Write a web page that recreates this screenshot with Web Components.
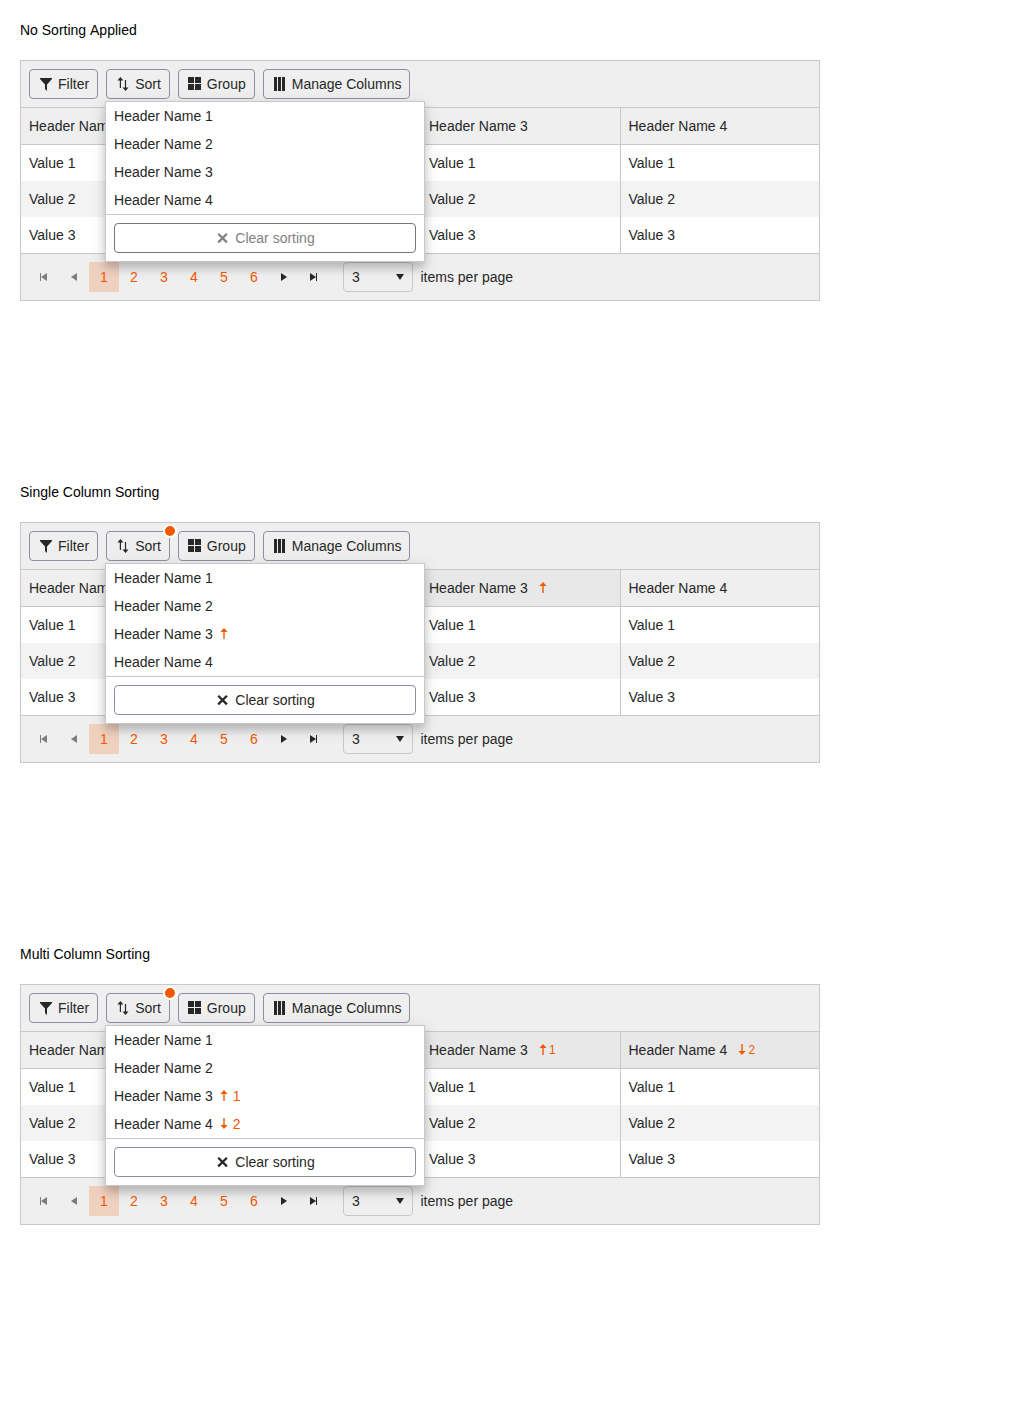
<!DOCTYPE html>
<html lang="en">
<head>
<meta charset="utf-8">
<title>Grid sorting</title>
<style>
html{background:#fff}
body{margin:0;padding:20px;display:flex;flex-direction:column;font:14px/20px "Liberation Sans",Arial,sans-serif;color:#000}
</style>
</head>
<body>
<sort-demo heading="No Sorting Applied" sort=""></sort-demo>
<sort-demo heading="Single Column Sorting" sort="3:asc"></sort-demo>
<sort-demo heading="Multi Column Sorting" sort="3:asc,4:desc"></sort-demo>
<script>
const ICONS = {
  filter: '<path d="M2 2h12v1L9 8.500V15l-2-2V8.500L2 3z"/>',
  sort: '<path d="M5.400 1L8.400 4.500H6V12H4.800V4.500H2.400zM9.900 4h1.200v7.500h2.400L10.500 15l-3-3.500h2.400z"/>',
  group: '<path d="M1 1h6v6H1zM8 1h6v6H8zM1 8h6v6H1zM8 8h6v6H8z"/>',
  columns: '<path d="M2 1h3v14H2zM6 1h3v14H6zM10 1h3v14h-3z"/>',
  close: '<path d="M3.200 3.700l8.700 8.700M11.900 3.700l-8.700 8.700" fill="none" stroke="currentColor" stroke-width="2.300"/>',
  asc: '<path d="M8 2l3.600 4H8.700v7H7.300V6H4.400z"/>',
  desc: '<path d="M7.300 2h1.400v7h2.900L8 13 4.400 9h2.900z"/>',
  first: '<path d="M4 4h1v8H4zM11 4v8L5 8z"/>',
  prev: '<path d="M11 4v8L5 8z"/>',
  next: '<path d="M5 4v8l6-4z"/>',
  last: '<path d="M4 4v8l6-4zM10 4h1v8h-1z"/>',
  caret: '<path d="M4 5h8l-4 6z"/>'
};
const parseSort = s => (s || '').split(',').filter(Boolean).map(p => p.split(':'));

class UiIcon extends HTMLElement {
  connectedCallback() {
    this.attachShadow({mode: 'open'}).innerHTML = `<style>
      :host{display:inline-block;flex:none;width:16px;height:16px}
      svg{display:block;width:16px;height:16px;fill:currentColor}
    </style><svg viewBox="0 0 16 16">${ICONS[this.getAttribute('name')]}</svg>`;
  }
}

class UiButton extends HTMLElement {
  connectedCallback() {
    const icon = this.getAttribute('icon');
    this.attachShadow({mode: 'open'}).innerHTML = `<style>
      :host{display:flex;position:relative}
      button{display:flex;flex:1;align-items:center;justify-content:center;gap:4px;box-sizing:border-box;height:30px;margin:0;padding:0 8px;
        border:1px solid #8f8f9d;border-radius:4px;background:none;color:#272727;font:inherit;white-space:nowrap}
      :host([disabled]) button{border-color:#777;color:#818181}
      i{position:absolute;top:-7px;right:-7px;width:10px;height:10px;border:2px solid #fff;border-radius:50%;background:#f35800}
    </style><button><ui-icon name="${icon}"></ui-icon><slot></slot></button>${this.hasAttribute('badge') ? '<i></i>' : ''}<slot name="popup"></slot>`;
  }
}

class SortMenu extends HTMLElement {
  connectedCallback() {
    const sort = parseSort(this.getAttribute('sort'));
    const items = [1, 2, 3, 4].map(n => {
      const i = sort.findIndex(s => +s[0] === n);
      const mark = i < 0 ? '' : `<ui-icon name="${sort[i][1]}"></ui-icon>${sort.length > 1 ? `<b>${i + 1}</b>` : ''}`;
      return `<div class="item"><span>Header Name ${n}</span>${mark}</div>`;
    }).join('');
    this.attachShadow({mode: 'open'}).innerHTML = `<style>
      :host{display:block;position:absolute;z-index:2;top:32px;left:-1.120px;box-sizing:border-box;width:320px;border:1px solid #c8c8c8;background:#fff;color:#272727;
        box-shadow:0 6px 8px rgba(0,0,0,.16),0 4px 16px rgba(0,0,0,.12)}
      .item{display:flex;align-items:center;height:28px;padding:0 8px}
      ui-icon,b{color:#f35800;font-weight:normal}
      ui-icon{margin-left:3.600px}
      b{margin-left:.3px}
      .foot{border-top:1px solid #c8c8c8;padding:8px}
    </style>${items}<div class="foot"><ui-button icon="close" ${sort.length ? '' : 'disabled'}>Clear sorting</ui-button></div>`;
  }
}

class GridTable extends HTMLElement {
  connectedCallback() {
    const sort = parseSort(this.getAttribute('sort'));
    const head = [1, 2, 3, 4].map(n => {
      const i = sort.findIndex(s => +s[0] === n);
      const mark = i < 0 ? '' : `<ui-icon name="${sort[i][1]}"></ui-icon>${sort.length > 1 ? `<b>${i + 1}</b>` : ''}`;
      return `<div class="cell${i < 0 ? '' : ' sorted'}"><span>Header Name ${n}</span>${mark}</div>`;
    }).join('');
    const rows = [1, 2, 3].map(v => `<div class="row${v === 2 ? ' alt' : ''}">${`<div class="cell">Value ${v}</div>`.repeat(4)}</div>`).join('');
    this.attachShadow({mode: 'open'}).innerHTML = `<style>
      :host{display:block}
      .row{display:flex;height:36px;background:#fff}
      .row.alt{background:#f3f3f3}
      .row.head{background:#efefef;border-bottom:1px solid #c8c8c8}
      .cell{display:flex;flex:none;width:25%;align-items:center;box-sizing:border-box;padding:0 8px;border-left:1px solid #c8c8c8}
      .cell:first-child{border-left:0}
      .sorted{background:#e8e8e8}
      ui-icon,b{color:#f35800}
      ui-icon{margin-left:6.800px}
      b{font-weight:normal;font-size:12px;margin-left:-1.700px}
    </style><div class="row head">${head}</div>${rows}`;
  }
}

class GridPager extends HTMLElement {
  connectedCallback() {
    const pages = [1, 2, 3, 4, 5, 6].map(n => `<a class="${n === 1 ? 'current' : ''}">${n}</a>`).join('');
    this.attachShadow({mode: 'open'}).innerHTML = `<style>
      :host{display:flex;align-items:center;border-top:1px solid #c8c8c8;padding:8px}
      a,span{display:flex;align-items:center;justify-content:center;width:30px;height:30px}
      a{color:#f35800}
      .current{background:#f0d1c0}
      .off{color:#7c7c7c}
      .size{display:flex;align-items:center;justify-content:space-between;box-sizing:border-box;width:70px;height:30px;margin:0 7.500px 0 14px;padding:0 4px 0 8px;border:1px solid #c8c8c8;border-radius:4px}
    </style><span class="off"><ui-icon name="first"></ui-icon></span><span class="off"><ui-icon name="prev"></ui-icon></span>${pages}
    <span><ui-icon name="next"></ui-icon></span><span><ui-icon name="last"></ui-icon></span>
    <div class="size">3<ui-icon name="caret"></ui-icon></div><div>items per page</div>`;
  }
}

class SortDemo extends HTMLElement {
  connectedCallback() {
    const sort = this.getAttribute('sort');
    this.attachShadow({mode: 'open'}).innerHTML = `<style>
      :host{display:flex;flex-direction:column;height:462px}
      .title{margin-bottom:20px;font-kerning:none}
      .grid{box-sizing:border-box;width:800px;border:1px solid #c8c8c8;background:#efefef;color:#272727}
      .bar{display:flex;gap:8px;padding:8px;border-bottom:1px solid #c8c8c8}
    </style><div class="title">${this.getAttribute('heading')}</div>
    <div class="grid">
      <div class="bar"><ui-button icon="filter">Filter</ui-button>
      <ui-button icon="sort" ${sort ? 'badge' : ''}>Sort<sort-menu slot="popup" sort="${sort}"></sort-menu></ui-button>
      <ui-button icon="group">Group</ui-button><ui-button icon="columns">Manage Columns</ui-button></div>
      <grid-table sort="${sort}"></grid-table>
      <grid-pager></grid-pager>
    </div>`;
  }
}
customElements.define('ui-icon', UiIcon);
customElements.define('ui-button', UiButton);
customElements.define('sort-menu', SortMenu);
customElements.define('grid-table', GridTable);
customElements.define('grid-pager', GridPager);
customElements.define('sort-demo', SortDemo);
</script>
</body>
</html>
